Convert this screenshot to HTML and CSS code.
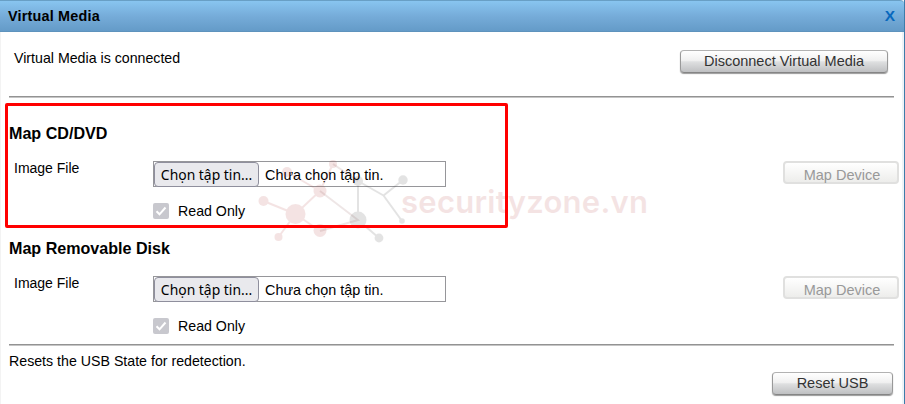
FILE: index.html
```html
<!DOCTYPE html>
<html lang="vi">
<head>
<meta charset="utf-8">
<title>Virtual Media</title>
<link rel="stylesheet" href="styles.css">
</head>
<body>
<main class="dialog">
  <header class="titlebar"><span class="title">Virtual Media</span><span class="close">X</span></header>
  <div class="status"><span class="status-text">Virtual Media is connected</span><button class="btn disconnect">Disconnect Virtual Media</button></div>
  <div class="rule"></div>
  <section class="map">
    <h2>Map CD/DVD</h2>
    <div class="row"><span class="label">Image File</span><div class="file"><span class="choose">Chọn tập tin...</span><span class="none">Chưa chọn tập tin.</span></div><button class="btn off" disabled>Map Device</button></div>
    <div class="readonly"><svg class="check" viewBox="0 0 16 16"><rect width="16" height="16" rx="2"/><path d="M3.5 8.3 6.5 11.3 12.5 4.5"/></svg><span>Read Only</span></div>
  </section>
  <section class="map">
    <h2>Map Removable Disk</h2>
    <div class="row"><span class="label">Image File</span><div class="file"><span class="choose">Chọn tập tin...</span><span class="none">Chưa chọn tập tin.</span></div><button class="btn off" disabled>Map Device</button></div>
    <div class="readonly"><svg class="check" viewBox="0 0 16 16"><rect width="16" height="16" rx="2"/><path d="M3.5 8.3 6.5 11.3 12.5 4.5"/></svg><span>Read Only</span></div>
  </section>
  <div class="rule"></div>
  <p class="reset-text">Resets the USB State for redetection.</p>
  <div class="reset"><button class="btn reset-btn">Reset USB</button></div>
  <svg class="watermark" viewBox="250 150 410 100">
    <g class="pink">
      <path d="M263.5 201 295.5 214 320 191 333 164M295.5 214 278.5 237M295.5 214 320 231M287 172 320 191"/>
      <circle cx="263.5" cy="201" r="5"/><circle cx="295.5" cy="214" r="10"/><circle cx="320" cy="191" r="6.5"/><circle cx="278.5" cy="237" r="4"/><circle cx="320" cy="230.500" r="6.500"/><circle cx="287" cy="172" r="5"/><circle cx="333" cy="164" r="4"/>
    </g>
    <g class="mixed"><path d="M320 191 358 220 320 231M333 164 358 181"/></g>
    <g class="gray">
      <path d="M358 220V181M383.500 195.500 358 181M383.500 195.500 403 180M383.500 195.500 402 221M358 220 379 238"/>
      <circle cx="358" cy="220" r="8.500"/><circle cx="358" cy="181" r="5"/><circle cx="403" cy="180" r="4.700"/><circle cx="402" cy="221" r="2.800"/><circle cx="379" cy="238" r="4.400"/>
    </g>
    <text x="401" y="213" textLength="247">securityzone.vn</text>
  </svg>
  <div class="highlight"></div>
</main>
</body>
</html>
```
FILE: styles.css
```css
* { box-sizing: border-box; }
body { margin: 0; background: #fff; font: 14.2px/18px "Liberation Sans", Arial, sans-serif; color: #000; }
.dialog { position: relative; width: 905px; height: 404px; overflow: hidden; border-right: 1px solid #3d7caa; box-shadow: inset -2px 0 #eef3f8, inset 1px 0 #f3f3f3; }
.titlebar { height: 32px; padding: 0 9px 0 8px; display: flex; justify-content: space-between; align-items: center; font-weight: bold; font-size: 14.4px; letter-spacing: .2px; border-top: 1px solid #689fc5; border-bottom: 1px solid #5e93bd; border-radius: 0 4px 0 0; background: linear-gradient(#88c5f0, #76acd9 50%, #649bc8); }
.close { color: #0868bd; font-size: 15.5px; letter-spacing: 0; }
.status { height: 64px; display: flex; justify-content: space-between; padding: 18px 16px 0 14px; }
.status-text { line-height: 17px; }
.rule { height: 2px; margin: 0 10px 0 9px; background: #939393; border-bottom: 1px solid #c5c5c5; }
.btn { height: 23px; padding: 0; font: 14.5px/19px "Liberation Sans", Arial, sans-serif; color: #333; border: 1px solid #aaa; border-color: #b2b2b2 #999 #858585; border-radius: 4px; background: linear-gradient(#fff 0%, #f0f0f0 45%, #dedfe0 52%, #bfc0c2 100%); box-shadow: 0 1px 1px #999; }
.disconnect { width: 208px; }
.map { height: 115px; padding-top: 25px; }
h2 { margin: 0 0 0 9px; width: max-content; font-size: 16.1px; line-height: 20px; }
.row { height: 44px; padding: 18px 5px 0 14px; display: flex; align-items: flex-start; }
.label { width: 139px; line-height: 15px; font-size: 14px; }
.file { width: 293px; height: 26px; border: 1px solid #96969a; display: flex; align-items: center; }
.choose { width: 105px; height: 25px; flex: none; border: 1px solid #8f8f9d; border-radius: 4px; background: #e9e9ed; font: 13.9px/23px "Noto Sans", sans-serif; text-align: center; white-space: nowrap; }
.none { margin-left: 6px; padding-top: 1px; white-space: nowrap; font-size: 14.4px; }
.off { width: 116px; margin-left: auto; padding: 3px 0 0 2px; color: #999; border: 2px solid #e0e0df; background: linear-gradient(#fff, #ededeb); box-shadow: none; }
.readonly { display: flex; align-items: center; gap: 9px; margin: 16px 0 0 153px; height: 16px; }
.check { width: 16px; height: 16px; fill: #c8c8ce; }
.check path { fill: none; stroke: #fff; stroke-width: 2; }
.map + .rule { margin-top: 16px; }
.reset-text { margin: 6px 0 0 9px; }
.reset { display: flex; justify-content: flex-end; padding: 2px 11px 0 0; }
.reset-btn { width: 121px; }
.watermark { position: absolute; left: 250px; top: 150px; width: 410px; height: 100px; }
.watermark path { fill: none; stroke-width: 2; }
.pink { fill: #b54444; stroke: #b54444; opacity: .14; }
.pink circle, .gray circle { stroke: none; }
.gray { fill: #333; stroke: #333; opacity: .13; }
.mixed { stroke: #865050; opacity: .14; }
.watermark text { font: 600 31px Inter, sans-serif; fill: #b54444; opacity: .14; }
.highlight { position: absolute; left: 5px; top: 103px; width: 503px; height: 125px; border: 3px solid #f00; border-radius: 2px; }
```
